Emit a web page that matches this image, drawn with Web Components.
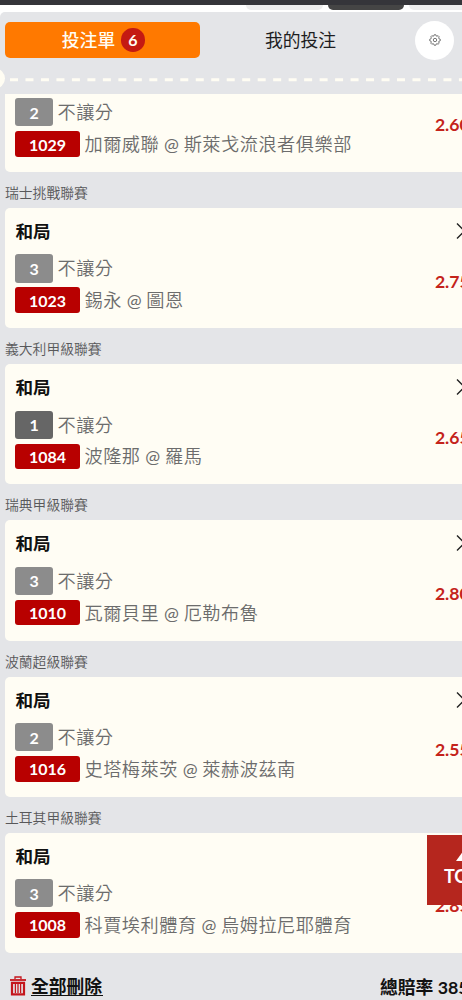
<!DOCTYPE html>
<html lang="zh-Hant">
<head>
<meta charset="utf-8">
<title>投注單</title>
<style>
html,body{margin:0;height:1000px;overflow:hidden;background:#fff}
body{font-family:Lato,"Noto Sans CJK TC",sans-serif}
</style>
</head>
<body>
<bet-slip></bet-slip>
<script>
class SlipTabs extends HTMLElement{
  constructor(){
    super();
    this.attachShadow({mode:'open'}).innerHTML=`
<style>
:host{display:flex;align-items:center;height:36px;padding:10px 0 0 5px}
.tab{width:195px;height:36px;border-radius:5px;display:flex;align-items:center;justify-content:center;box-sizing:border-box;font-size:17.8px;line-height:36px;color:#1d1d1f;flex:none}
.on{background:#ff7900;color:#fffdf4;font-weight:500;gap:6px;padding-left:1.5px}
.n{width:23.5px;height:23.5px;line-height:24.5px;border-radius:50%;background:#c41a12;text-align:center;font-size:16px;font-weight:700}
.mine{width:200px;margin-left:.5px}
.set{width:39px;height:39px;border-radius:50%;background:#fff;display:grid;place-items:center;flex:none;margin-left:14.5px}
</style>
<div class="tab on"><span>投注單</span><span class="n">6</span></div>
<div class="tab mine">我的投注</div>
<div class="set"><svg width="12" height="12" viewBox="0 0 12 12" fill="none" stroke="#555" stroke-width=".8" stroke-linejoin="round"><path d="M5 1.8 5.3.7H6.7L7 1.8 8 2.2 9.1 1.7 10.2 2.8 9.7 3.9 10.2 5 11.3 5.3V6.7L10.2 7 9.7 8 10.2 9.2 9.1 10.2 8 9.7 7 10.2 6.7 11.3H5.3L5 10.2 4 9.7 2.8 10.2 1.8 9.2 2.3 8 1.8 7 .7 6.7V5.3L1.8 5 2.3 3.9 1.8 2.8 2.8 1.7 4 2.2Z"/><circle cx="6" cy="6" r="1.7"/></svg></div>`;
  }
}
customElements.define('slip-tabs',SlipTabs);

class TicketTear extends HTMLElement{
  constructor(){
    super();
    this.attachShadow({mode:'open'}).innerHTML=`
<style>
:host{display:block;height:36px}
svg{display:block}
</style>
<svg width="462" height="36" viewBox="0 0 462 36"><circle cx="-5" cy="20.5" r="10" fill="#fffdf3"/><path d="M10 21.7H462" stroke="#fffdf3" stroke-width="3" stroke-dasharray="8 7.48"/></svg>`;
  }
}
customElements.define('ticket-tear',TicketTear);

class BetCard extends HTMLElement{
  constructor(){
    super();
    const a=k=>this.getAttribute(k);
    const head=a('league');
    this.attachShadow({mode:'open'}).innerHTML=`
<style>
:host{display:block;height:156.2px;width:500px}
.league{height:36px;line-height:41.5px;font-size:13.8px;font-weight:350;color:#58585a;padding-left:5px;box-sizing:border-box}
.card{height:120.2px;box-sizing:border-box;margin-left:5px;border-radius:5px;background:#fffdf4;padding:10px 0 0 10.4px;display:grid;grid-template-columns:419.5px 1fr}
.title{font-size:17.6px;line-height:27px;font-weight:700;color:#111;height:36.3px}
.row{display:flex;align-items:center;color:#6c6c6c;font-weight:350;font-size:18.2px;letter-spacing:.5px;white-space:nowrap}
.label{position:relative;top:-1px}
.r1{height:28.2px;margin-bottom:4.8px}
.r2{height:25.7px}
.at{font-weight:400;font-size:17.8px;letter-spacing:0;word-spacing:.2px}
.tag{height:100%;box-sizing:border-box;display:flex;align-items:center;justify-content:center;color:#fff;font-weight:700;font-size:16px;letter-spacing:0;border-radius:3px;margin-right:4.8px}
.no{width:37.3px;background:var(--no,#8c8c8c)}
.id{width:64.3px;background:#b80000}
.side{display:flex;flex-direction:column}
.x{height:22px;padding:4px 0 0 21px}
svg{display:block}
.odds{margin-top:25.5px;font-weight:700;font-size:17.6px;line-height:24px;color:#c4231b}
</style>
<div class="league">${head||''}</div>
<div class="card">
<div><div class="title">${head?'和局':''}</div>
<div class="row r1"><span class="tag no">${a('no')}</span><span class="label">不讓分</span></div>
<div class="row r2"><span class="tag id">${a('code')}</span><span class="label"><slot name="home"></slot><span class="at"> @ </span><slot name="away"></slot></span></div></div>
<div class="side"><div class="x"><svg width="18" height="18" viewBox="0 0 18 18" stroke="#222" stroke-width="1.4"><path d="M1 1.5l15 15M16 1.5l-15 15"/></svg></div><div class="odds">${a('odds')}</div></div>
</div>`;
    if(a('no')==='1')this.style.setProperty('--no','#666');
  }
}

class SlipFooter extends HTMLElement{
  constructor(){
    super();
    this.attachShadow({mode:'open'}).innerHTML=`
<style>
:host{display:flex;align-items:center;height:47px;padding:19px 0 0 10px;width:520px;box-sizing:border-box;font-size:17.8px;font-weight:700;color:#111;white-space:nowrap}
svg{flex:none;margin:-1px 5px 0 0;display:block}
.del{border-bottom:1.6px solid #111;line-height:18px;height:18px;width:72px;display:block}
.total{margin-left:277px}
</style>
<svg width="16" height="20" viewBox="0 0 16 20" fill="none" stroke="#c4161c"><path d="M0 4H16" stroke-width="1.8"/><path d="M5 3V1H11V3" stroke-width="1.3"/><path d="M2 6.8V18.4H14V6.8Z" stroke-width="2.2"/><path d="M5.4 8V17M8 8V17M10.6 8V17" stroke-width="1.3"/></svg>
<span class="del">全部刪除</span><span class="total">總賠率 385</span>`;
  }
}
customElements.define('slip-footer',SlipFooter);

class TopButton extends HTMLElement{
  constructor(){
    super();
    this.attachShadow({mode:'open'}).innerHTML=`
<style>
:host{position:absolute;left:427px;top:835px;width:70px;height:70px;background:#b5261e;color:#fff;display:flex;flex-direction:column;align-items:center;font:700 18px/20px Lato,sans-serif}
svg{margin:17px 0 5px;display:block}
</style>
<svg width="13" height="9" viewBox="0 0 13 9"><path d="M0 9 6.5 0 13 9Z" fill="#fff"/></svg><span>TOP</span>`;
  }
}
customElements.define('top-button',TopButton);

class BetSlip extends HTMLElement{
  constructor(){
    super();
    this.attachShadow({mode:'open'}).innerHTML=`
<style>
:host{display:block;position:relative;width:462px;height:1000px;overflow:hidden;background:#fff}
.bar{height:5px;background:#35353a}
.under{display:flex;height:7px;gap:5px;padding-left:246px}
.under i{flex:none;width:76.5px;height:5.2px;border-radius:0 0 5px 5px;background:#ededed}
.under i:nth-child(2){background:#454545}
.panel{background:#e4e5e8;border-radius:5px 0 0;height:988px}
.list{height:859px;overflow:hidden;display:flex;flex-direction:column;justify-content:flex-end}
bet-card{flex:none}
</style>
<div class="bar"></div>
<div class="under"><i></i><i></i><i></i></div>
<div class="panel">
<slip-tabs></slip-tabs>
<ticket-tear></ticket-tear>
<div class="list">
<bet-card no="2" code="1029" odds="2.60"><span slot="home">加爾威聯</span><span slot="away">斯萊戈流浪者俱樂部</span></bet-card>
<bet-card league="瑞士挑戰聯賽" no="3" code="1023" odds="2.75"><span slot="home">錫永</span><span slot="away">圖恩</span></bet-card>
<bet-card league="義大利甲級聯賽" no="1" code="1084" odds="2.65"><span slot="home">波隆那</span><span slot="away">羅馬</span></bet-card>
<bet-card league="瑞典甲級聯賽" no="3" code="1010" odds="2.80"><span slot="home">瓦爾貝里</span><span slot="away">厄勒布魯</span></bet-card>
<bet-card league="波蘭超級聯賽" no="2" code="1016" odds="2.55"><span slot="home">史塔梅萊茨</span><span slot="away">萊赫波茲南</span></bet-card>
<bet-card league="土耳其甲級聯賽" no="3" code="1008" odds="2.85"><span slot="home">科賈埃利體育</span><span slot="away">烏姆拉尼耶體育</span></bet-card>
</div>
<slip-footer></slip-footer>
</div>
<top-button></top-button>`;
  }
}
customElements.define('bet-slip',BetSlip);
customElements.define('bet-card',BetCard);
</script>
</body>
</html>
